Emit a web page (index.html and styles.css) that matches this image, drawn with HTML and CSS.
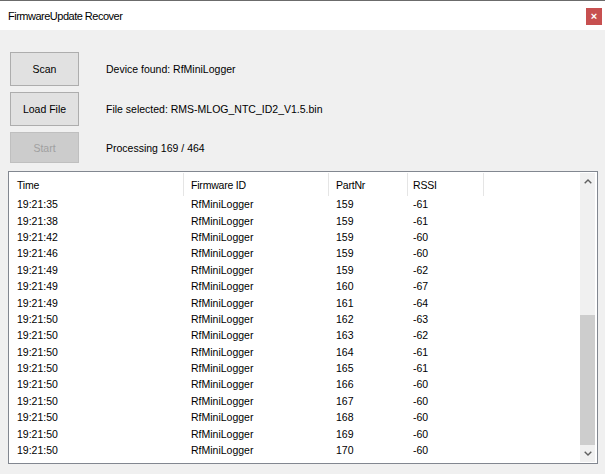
FILE: index.html
```html
<!DOCTYPE html>
<html>
<head>
<meta charset="utf-8">
<link rel="stylesheet" href="styles.css">
</head>
<body>
<div class="window">
  <div class="titlebar">
    <span class="title">FirmwareUpdate Recover</span>
    <span class="close">&#215;</span>
  </div>
  <div class="controls">
    <div class="ctrl-row">
      <div class="btn">Scan</div>
      <span class="label">Device found: RfMiniLogger</span>
    </div>
    <div class="ctrl-row">
      <div class="btn">Load File</div>
      <span class="label">File selected: RMS-MLOG_NTC_ID2_V1.5.bin</span>
    </div>
    <div class="ctrl-row">
      <div class="btn disabled">Start</div>
      <span class="label">Processing 169 / 464</span>
    </div>
  </div>
  <div class="list">
    <div class="list-body">
      <div class="header">
        <div class="cell c1">Time</div>
        <div class="cell c2">Firmware ID</div>
        <div class="cell c3">PartNr</div>
        <div class="cell c4">RSSI</div>
        <div class="cell c5"></div>
      </div>
      <div class="rows">
        <div class="row"><div class="cell c1">19:21:35</div><div class="cell c2">RfMiniLogger</div><div class="cell c3">159</div><div class="cell c4">-61</div></div>
        <div class="row"><div class="cell c1">19:21:38</div><div class="cell c2">RfMiniLogger</div><div class="cell c3">159</div><div class="cell c4">-61</div></div>
        <div class="row"><div class="cell c1">19:21:42</div><div class="cell c2">RfMiniLogger</div><div class="cell c3">159</div><div class="cell c4">-60</div></div>
        <div class="row"><div class="cell c1">19:21:46</div><div class="cell c2">RfMiniLogger</div><div class="cell c3">159</div><div class="cell c4">-60</div></div>
        <div class="row"><div class="cell c1">19:21:49</div><div class="cell c2">RfMiniLogger</div><div class="cell c3">159</div><div class="cell c4">-62</div></div>
        <div class="row"><div class="cell c1">19:21:49</div><div class="cell c2">RfMiniLogger</div><div class="cell c3">160</div><div class="cell c4">-67</div></div>
        <div class="row"><div class="cell c1">19:21:49</div><div class="cell c2">RfMiniLogger</div><div class="cell c3">161</div><div class="cell c4">-64</div></div>
        <div class="row"><div class="cell c1">19:21:50</div><div class="cell c2">RfMiniLogger</div><div class="cell c3">162</div><div class="cell c4">-63</div></div>
        <div class="row"><div class="cell c1">19:21:50</div><div class="cell c2">RfMiniLogger</div><div class="cell c3">163</div><div class="cell c4">-62</div></div>
        <div class="row"><div class="cell c1">19:21:50</div><div class="cell c2">RfMiniLogger</div><div class="cell c3">164</div><div class="cell c4">-61</div></div>
        <div class="row"><div class="cell c1">19:21:50</div><div class="cell c2">RfMiniLogger</div><div class="cell c3">165</div><div class="cell c4">-61</div></div>
        <div class="row"><div class="cell c1">19:21:50</div><div class="cell c2">RfMiniLogger</div><div class="cell c3">166</div><div class="cell c4">-60</div></div>
        <div class="row"><div class="cell c1">19:21:50</div><div class="cell c2">RfMiniLogger</div><div class="cell c3">167</div><div class="cell c4">-60</div></div>
        <div class="row"><div class="cell c1">19:21:50</div><div class="cell c2">RfMiniLogger</div><div class="cell c3">168</div><div class="cell c4">-60</div></div>
        <div class="row"><div class="cell c1">19:21:50</div><div class="cell c2">RfMiniLogger</div><div class="cell c3">169</div><div class="cell c4">-60</div></div>
        <div class="row"><div class="cell c1">19:21:50</div><div class="cell c2">RfMiniLogger</div><div class="cell c3">170</div><div class="cell c4">-60</div></div>
      </div>
    </div>
    <div class="scrollbar">
      <div class="arrow up"><svg width="8" height="5" viewBox="0 0 8 5"><path d="M0.7 4.3 L4 1 L7.3 4.3" fill="none" stroke="#606060" stroke-width="1.4"/></svg></div>
      <div class="track"><div class="thumb"></div></div>
      <div class="arrow down"><svg width="8" height="5" viewBox="0 0 8 5"><path d="M0.7 0.7 L4 4 L7.3 0.7" fill="none" stroke="#606060" stroke-width="1.4"/></svg></div>
    </div>
  </div>
</div>
</body>
</html>
```
FILE: styles.css
```css
html, body {
  margin: 0;
  padding: 0;
}
body {
  background: #f0f0f0;
  font-family: "Liberation Sans", Arial, sans-serif;
  font-size: 10.5px;
  color: #000;
}
.window {
  width: 605px;
  height: 474px;
  background: #f0f0f0;
  overflow: hidden;
}
.titlebar {
  height: 29px;
  border-top: 1px solid #6b6b6b;
  background: #fff;
  display: flex;
  align-items: center;
  padding-left: 8px;
  padding-right: 3px;
}
.title {
  font-size: 11px;
  letter-spacing: -0.5px;
  color: #000;
}
.close {
  margin-left: auto;
  width: 16px;
  height: 17px;
  background: #c75050;
  color: #fff;
  font-size: 11px;
  font-weight: bold;
  display: flex;
  align-items: center;
  justify-content: center;
  line-height: 1;
  margin-top: 2px;
}
.controls {
  padding: 22px 0 0 10px;
  display: flex;
  flex-direction: column;
  gap: 6px;
}
.ctrl-row {
  display: flex;
  align-items: center;
}
.btn {
  width: 69px;
  height: 34px;
  box-sizing: border-box;
  border: 1px solid #adadad;
  background: #e1e1e1;
  display: flex;
  align-items: center;
  justify-content: center;
}
.btn.disabled {
  background: #cccccc;
  border-color: #bfbfbf;
  color: #a0a0a0;
  height: 31px;
}
.label {
  margin-left: 27px;
}
.list {
  margin: 8px 0 0 8px;
  width: 590px;
  height: 293px;
  box-sizing: border-box;
  border: 1px solid #828790;
  background: #fff;
  padding: 1px 2px 1px 1px;
  display: flex;
}
.list-body {
  flex: 1;
  overflow: hidden;
}
.header {
  display: flex;
  height: 23px;
  letter-spacing: -0.2px;
}
.header .cell {
  border-right: 1px solid #e5e5e5;
  display: flex;
  align-items: center;
}
.header .c5 {
  border-right: none;
  flex: 1;
}
.row {
  display: flex;
  height: 16.4px;
  align-items: center;
}
.cell {
  box-sizing: border-box;
  white-space: nowrap;
}
.c1 { width: 174px; padding-left: 7px; }
.c2 { width: 145px; padding-left: 7px; }
.c3 { width: 79px; padding-left: 7px; }
.c4 { width: 76px; padding-left: 5px; }
.scrollbar {
  width: 15px;
  background: #f0f0f0;
  display: flex;
  flex-direction: column;
}
.arrow {
  height: 17px;
  display: flex;
  align-items: center;
  justify-content: center;
}
.track {
  flex: 1;
  display: flex;
  flex-direction: column;
  justify-content: flex-end;
}
.thumb {
  height: 130px;
  background: #cdcdcd;
}
```
